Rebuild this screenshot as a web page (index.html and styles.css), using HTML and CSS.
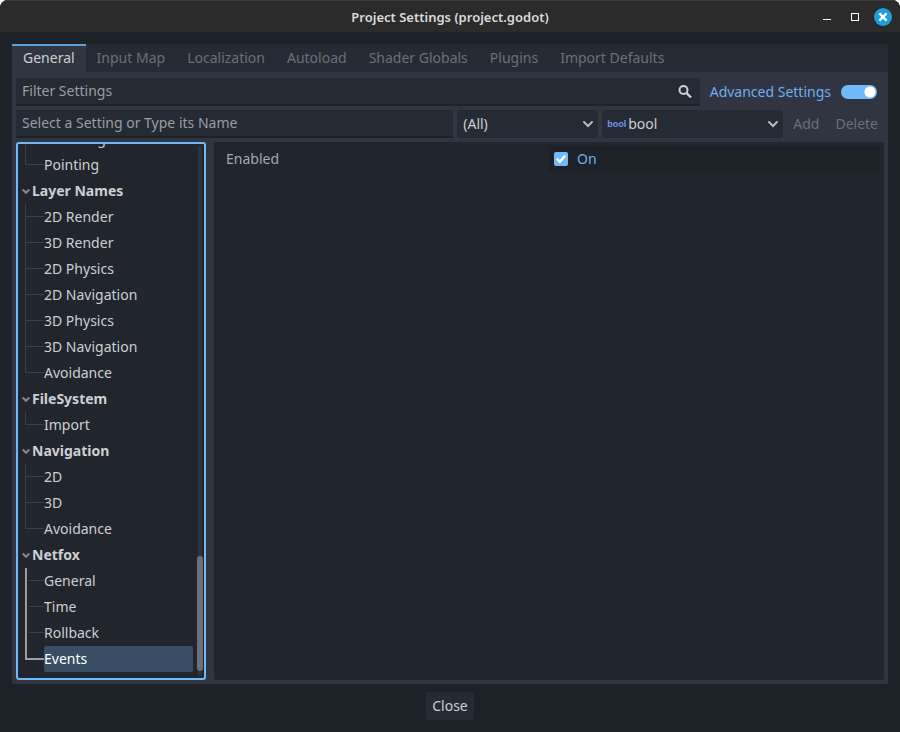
FILE: index.html
```html
<!DOCTYPE html>
<html lang="en">

<head>
    <meta charset="utf-8">
    <meta name="viewport" content="width=device-width, initial-scale=1">
    <title>Project Settings (project.godot)</title>
    <link rel="stylesheet" href="styles.css">
</head>

<body>
    <div class="window">
        <header class="titlebar">
            <h1>Project Settings (project.godot)</h1>
            <div class="window-buttons">
                <button type="button" aria-label="Minimize">
                    <svg width="18" height="18" viewBox="0 0 18 18"><path d="M5 11.5h8" stroke="#fff" /></svg>
                </button>
                <button type="button" aria-label="Maximize">
                    <svg width="18" height="18" viewBox="0 0 18 18"><rect x="5.5" y="5.5" width="7" height="7" fill="none" stroke="#fff" /></svg>
                </button>
                <button type="button" aria-label="Close window">
                    <svg width="18" height="18" viewBox="0 0 18 18"><circle cx="9" cy="9" r="9" fill="#1f9ede" /><path d="M5.4 5.4l7.2 7.2M12.6 5.4l-7.2 7.2" stroke="#fff" stroke-width="2.4" /></svg>
                </button>
            </div>
        </header>

        <main class="dialog">
            <nav class="tabs">
                <button type="button" class="tab active">General</button>
                <button type="button" class="tab">Input Map</button>
                <button type="button" class="tab">Localization</button>
                <button type="button" class="tab">Autoload</button>
                <button type="button" class="tab">Shader Globals</button>
                <button type="button" class="tab">Plugins</button>
                <button type="button" class="tab">Import Defaults</button>
            </nav>

            <div class="panel">
                <div class="toolbar">
                    <div class="search">
                        <input type="text" class="field" placeholder="Filter Settings" aria-label="Filter Settings">
                        <svg class="search-icon" width="16" height="16" viewBox="0 0 16 16"><circle cx="6.5" cy="6" r="4" fill="none" stroke="#d0d2d4" stroke-width="2" /><path d="M9.5 9l4.5 4.5" stroke="#d0d2d4" stroke-width="2.4" /></svg>
                    </div>
                    <label class="advanced">
                        Advanced Settings
                        <input type="checkbox" class="switch" checked>
                    </label>
                </div>

                <div class="toolbar">
                    <input type="text" class="field name-field" placeholder="Select a Setting or Type its Name" aria-label="Setting name">
                    <div class="dropdown feature">
                        <select aria-label="Feature">
                            <option>(All)</option>
                        </select>
                        <svg class="chevron" width="12" height="12" viewBox="0 0 12 12"><path d="M2 4l4 4 4-4" /></svg>
                    </div>
                    <div class="dropdown type">
                        <span class="type-icon" aria-hidden="true">bool</span>
                        <select aria-label="Type">
                            <option>bool</option>
                        </select>
                        <svg class="chevron" width="12" height="12" viewBox="0 0 12 12"><path d="M2 4l4 4 4-4" /></svg>
                    </div>
                    <button type="button" class="flat" disabled>Add</button>
                    <button type="button" class="flat" disabled>Delete</button>
                </div>

                <div class="split">
                    <div class="tree">
                        <div class="tree-list">
                            <ul>
                                <li><button type="button">Buffering</button></li>
                                <li><button type="button">Pointing</button></li>
                            </ul>

                            <h2><svg width="8" height="8" viewBox="0 0 8 8"><path d="M.7 2.5L4 5.8l3.3-3.3" /></svg>Layer Names</h2>
                            <ul>
                                <li><button type="button">2D Render</button></li>
                                <li><button type="button">3D Render</button></li>
                                <li><button type="button">2D Physics</button></li>
                                <li><button type="button">2D Navigation</button></li>
                                <li><button type="button">3D Physics</button></li>
                                <li><button type="button">3D Navigation</button></li>
                                <li><button type="button">Avoidance</button></li>
                            </ul>

                            <h2><svg width="8" height="8" viewBox="0 0 8 8"><path d="M.7 2.5L4 5.8l3.3-3.3" /></svg>FileSystem</h2>
                            <ul>
                                <li><button type="button">Import</button></li>
                            </ul>

                            <h2><svg width="8" height="8" viewBox="0 0 8 8"><path d="M.7 2.5L4 5.8l3.3-3.3" /></svg>Navigation</h2>
                            <ul>
                                <li><button type="button">2D</button></li>
                                <li><button type="button">3D</button></li>
                                <li><button type="button">Avoidance</button></li>
                            </ul>

                            <h2><svg width="8" height="8" viewBox="0 0 8 8"><path d="M.7 2.5L4 5.8l3.3-3.3" /></svg>Netfox</h2>
                            <ul class="open">
                                <li><button type="button">General</button></li>
                                <li><button type="button">Time</button></li>
                                <li><button type="button">Rollback</button></li>
                                <li class="selected"><button type="button">Events</button></li>
                            </ul>
                        </div>
                        <div class="scrollbar">
                            <div class="thumb"></div>
                        </div>
                    </div>

                    <div class="inspector">
                        <div class="property">
                            <label class="property-name" for="enabled">Enabled</label>
                            <label class="property-value">
                                <input type="checkbox" id="enabled" class="check" checked>
                                On
                            </label>
                        </div>
                    </div>
                </div>
            </div>

            <button type="button" class="close">Close</button>
        </main>
    </div>
</body>

</html>
```
FILE: styles.css
```css
* {
    box-sizing: border-box;
}

body {
    margin: 0;
    background: #fff;
    color: #cdcfd2;
    font-family: "Noto Sans", sans-serif;
    font-size: 14px;
    line-height: 20px;
}

button,
input,
select {
    font: inherit;
    color: inherit;
    margin: 0;
    padding: 0;
    border: none;
    background: none;
}

svg {
    display: block;
}

.window {
    display: flex;
    flex-direction: column;
    height: 100vh;
    background: #1d2229;
    border-radius: 8px 8px 0 0;
    overflow: hidden;
}

/* title bar */
.titlebar {
    display: grid;
    grid-template-columns: 1fr auto 1fr;
    align-items: center;
    height: 32px;
    padding: 0 8px;
    background: #2b2b2b;
    border-top: 1px solid #3b3b3b;
}

.titlebar h1 {
    grid-column: 2;
    margin: 0;
    font-size: 13px;
    font-weight: 600;
    color: #dadada;
}

.window-buttons {
    display: flex;
    justify-content: flex-end;
    gap: 10px;
}

/* dialog */
.dialog {
    flex: 1;
    display: flex;
    flex-direction: column;
    min-height: 0;
    padding: 12px;
}

.tabs {
    display: flex;
    background: #252b34;
    border-radius: 2px 2px 0 0;
}

.tab {
    height: 28px;
    padding: 0 11px 2px;
    border-top: 2px solid transparent;
    color: #6c7078;
}

.tab.active {
    background: #303541;
    border-top-color: #5f9fd5;
    color: #cdcfd2;
}

.panel {
    flex: 1;
    display: flex;
    flex-direction: column;
    gap: 4px;
    min-height: 0;
    padding: 6px 4px 4px;
    background: #303541;
    border-radius: 0 0 2px 2px;
}

.toolbar {
    display: flex;
    gap: 4px;
}

.field {
    width: 100%;
    height: 28px;
    padding: 0 6px 2px;
    background: #252b34;
    border-bottom: 2px solid #1d2229;
    border-radius: 2px 2px 0 0;
}

.field::placeholder {
    color: #9a9da2;
    opacity: 1;
}

.search {
    position: relative;
    flex: 1;
}

.search .field {
    display: block;
    padding-right: 28px;
}

.search-icon {
    position: absolute;
    top: 6px;
    right: 7px;
}

.advanced {
    display: flex;
    align-items: center;
    gap: 10px;
    padding: 0 7px 0 6px;
    color: #6cb0ee;
}

.switch {
    appearance: none;
    width: 36px;
    height: 14px;
    border-radius: 7px;
    background: radial-gradient(circle at 29px 7px, #fff 5px, #70bafa 6px);
}

.name-field {
    flex: 1;
    min-width: 0;
}

.dropdown {
    position: relative;
    height: 28px;
}

.dropdown select {
    appearance: none;
    width: 100%;
    height: 28px;
    padding: 0 24px 0 6px;
    background: #252b34;
    border-radius: 3px;
}

.feature {
    width: 141px;
}

.type {
    width: 181px;
}

.type select {
    padding-left: 26px;
}

.type-icon {
    position: absolute;
    left: 5px;
    top: 4px;
    font-family: "Liberation Sans Narrow", "Liberation Sans", sans-serif;
    font-size: 9px;
    font-weight: 700;
    color: #7394f5;
}

.chevron {
    position: absolute;
    right: 4px;
    top: 8px;
    pointer-events: none;
}

.chevron path {
    fill: none;
    stroke: #b9bbbf;
    stroke-width: 2;
    stroke-linecap: round;
}

.flat {
    padding: 0 6px;
    color: #6c7078;
}

/* section tree */
.split {
    flex: 1;
    display: flex;
    gap: 8px;
    min-height: 0;
}

.tree {
    flex: none;
    display: flex;
    gap: 4px;
    width: 190px;
    padding-right: 1px;
    background: #21252e;
    border: 2px solid #70bafa;
    border-radius: 3px;
    overflow: hidden;
}

.tree-list {
    flex: 1;
    display: flex;
    flex-direction: column;
    justify-content: flex-end;
    padding: 0 0 6px 4px;
}

.tree h2 {
    display: flex;
    align-items: center;
    gap: 2px;
    margin: 0;
    font-size: 14px;
    font-weight: 700;
    line-height: 26px;
}

.tree h2 path {
    fill: none;
    stroke: #85888e;
    stroke-width: 2;
}

.tree ul {
    margin: 0;
    padding: 0;
    list-style: none;
}

.tree li {
    position: relative;
    height: 26px;
    padding-left: 22px;
}

.tree li::before,
.tree li::after {
    content: "";
    position: absolute;
    left: 3px;
    background: #3b3f48;
}

.tree li::before {
    top: 0;
    width: 1px;
    height: 26px;
}

.tree li:last-child::before {
    height: 13px;
}

.tree li::after {
    top: 12px;
    width: 19px;
    height: 1px;
}

.tree li button {
    display: block;
    width: 100%;
    height: 26px;
    text-align: left;
    border-radius: 2px;
}

.tree .open li::before {
    width: 2px;
    background: #9c9ea2;
}

.tree .open li::after {
    left: 7px;
    width: 15px;
}

.tree .open .selected::after {
    left: 3px;
    width: 19px;
    height: 2px;
    background: #9c9ea2;
}

.selected button {
    background: #384e65;
    color: #fff;
}

.scrollbar {
    display: flex;
    flex-direction: column;
    justify-content: flex-end;
    width: 6px;
    margin: 2px 0;
    padding-bottom: 5px;
    background: linear-gradient(#2e323b, #2e323b) center / 4px 100% no-repeat;
}

.thumb {
    height: 22%;
    border-radius: 3px;
    background: #6c6f75;
}

/* inspector */
.inspector {
    flex: 1;
    padding: 4px;
    background: #21252e;
    border-radius: 2px;
}

.property {
    display: grid;
    grid-template-columns: 1fr 1fr;
    line-height: 26px;
}

.property-name {
    padding-left: 8px;
    color: #a4a7ab;
}

.property-value {
    display: flex;
    align-items: center;
    gap: 9px;
    padding-left: 5px;
    background: #1d2128;
    border-radius: 3px;
    color: #6cb0ee;
}

.check {
    appearance: none;
    display: grid;
    place-items: center;
    width: 14px;
    height: 14px;
    border-radius: 2px;
    background: #70bafa;
}

.check:checked::before {
    content: "";
    width: 10px;
    height: 10px;
    background: #fff;
    clip-path: polygon(0 55%, 16% 38%, 38% 60%, 82% 8%, 100% 24%, 40% 96%);
}

.close {
    align-self: center;
    height: 28px;
    margin-top: 8px;
    padding: 0 6px;
    background: #252b34;
    border-radius: 2px;
}
```
